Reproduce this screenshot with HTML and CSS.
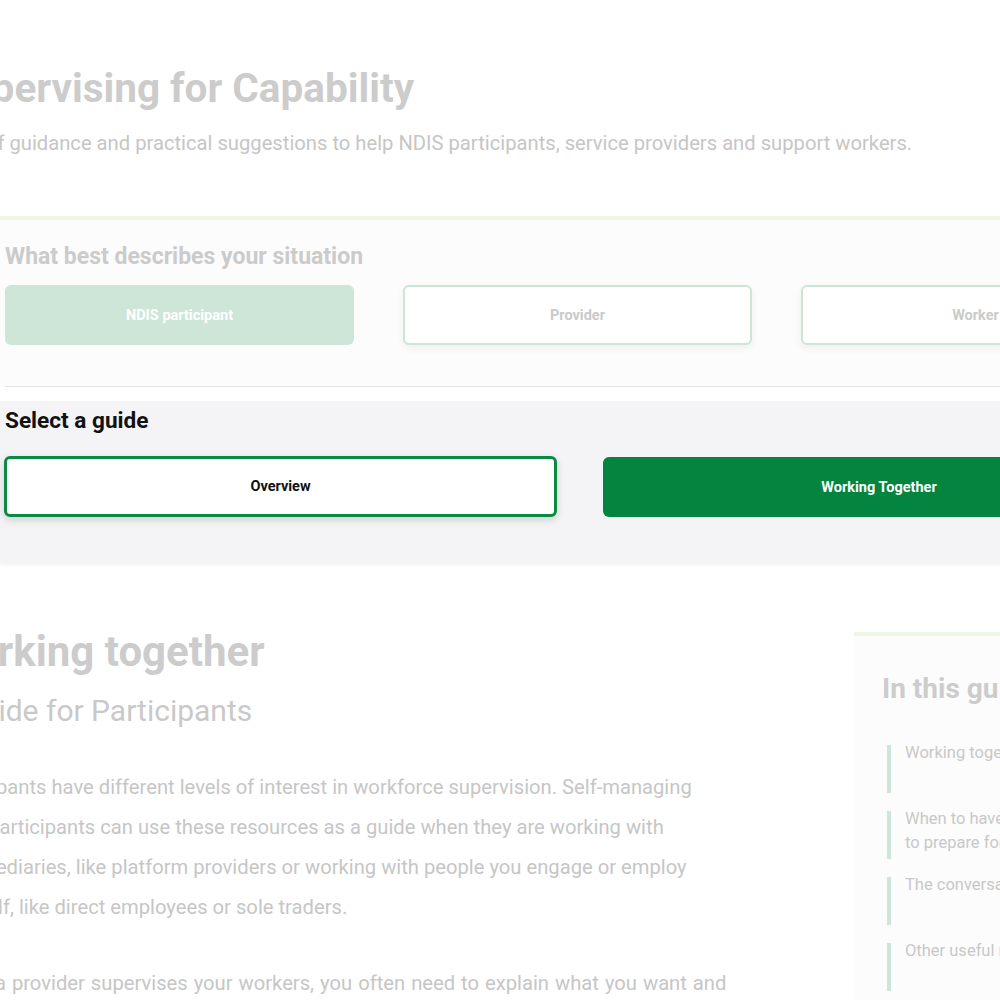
FILE: index.html
```html
<!DOCTYPE html>
<html lang="en">
<head>
<meta charset="utf-8">
<title>Supervising for Capability</title>
<link rel="stylesheet" href="styles.css">
</head>
<body>
<div class="page">
  <header class="hero">
    <h1 class="hero-title">Supervising for Capability</h1>
    <p class="hero-sub">A set of guidance and practical suggestions to help NDIS participants, service providers and support workers.</p>
  </header>

  <section class="situation">
    <h2 class="situation-title">What best describes your situation</h2>
    <div class="situation-options">
      <button class="opt opt-active">NDIS participant</button>
      <button class="opt">Provider</button>
      <button class="opt">Worker</button>
    </div>
    <div class="separator"></div>
  </section>

  <section class="guides">
    <h2 class="guides-title">Select a guide</h2>
    <div class="guides-options">
      <button class="guide guide-outline">Overview</button>
      <button class="guide guide-filled">Working Together</button>
    </div>
  </section>

  <div class="content">
    <main class="main">
      <h2 class="main-title">Working together</h2>
      <p class="main-sub">A guide for Participants</p>
      <p class="para">Participants have different levels of interest in workforce supervision. Self-managing NDIS participants can use these resources as a guide when they are working with intermediaries, like platform providers or working with people you engage or employ yourself, like direct employees or sole traders.</p>
      <p class="para">When a provider supervises your workers, you often need to explain what you want and</p>
    </main>
    <aside class="toc">
      <h3 class="toc-title">In this guide</h3>
      <ul class="toc-list">
        <li class="toc-item"><span class="toc-text">Working together</span></li>
        <li class="toc-item"><span class="toc-text">When to have a conversation and how<br>to prepare for it</span></li>
        <li class="toc-item"><span class="toc-text">The conversation</span></li>
        <li class="toc-item"><span class="toc-text">Other useful resources</span></li>
      </ul>
    </aside>
  </div>
</div>
</body>
</html>
```

FILE: styles.css
```css
html, body {
  margin: 0;
  padding: 0;
  background: #ffffff;
}
body {
  overflow: hidden;
  font-family: Roboto, "Noto Sans", sans-serif;
  width: 1000px;
  height: 1000px;
}
.page {
  width: 1200px;
}
button {
  font-family: inherit;
  cursor: pointer;
}
.hero {
  margin-left: -56px;
  padding-top: 63px;
}
.hero-title {
  margin: 0;
  font-size: 40.5px;
  line-height: 50px;
  font-weight: 700;
  color: #cccccc;
}
.hero-sub {
  margin: 17px 0 0 -9px;
  font-size: 20.2px;
  line-height: 26px;
  color: #c6c6c6;
}
.situation {
  margin-top: 60px;
  border-top: 4px solid #eef5e3;
  background: #fcfcfc;
  padding: 22px 0 0 5px;
}
.situation-title {
  margin: 0;
  font-size: 23px;
  line-height: 30px;
  font-weight: 700;
  color: #cbcbcb;
}
.situation-options {
  margin-top: 13px;
  display: grid;
  grid-template-columns: 349px 349px 349px;
  column-gap: 49px;
}
.opt {
  height: 60px;
  border: 2px solid #cbe6d6;
  border-radius: 6px;
  background: #ffffff;
  color: #cacaca;
  font-size: 14.5px;
  font-weight: 700;
  box-shadow: 0 3px 8px rgba(0, 0, 0, 0.06);
}
.opt-active {
  background: #cde6d8;
  border-color: #cde6d8;
  color: #ffffff;
  box-shadow: none;
}
.separator {
  margin-top: 41px;
  height: 1px;
  background: #e3e3e3;
}
.guides {
  margin-top: 14px;
  background: #f4f3f6;
  padding: 5px 0 46px 5px;
  box-shadow: 0 2px 3px rgba(0, 0, 0, 0.05);
}
.guides-title {
  margin: 0;
  font-size: 22.6px;
  line-height: 30px;
  font-weight: 700;
  color: #111111;
}
.guides-options {
  margin-top: 20px;
  display: grid;
  grid-template-columns: 552px 552px;
  column-gap: 46px;
}
.guide {
  height: 61px;
  border-radius: 6px;
  font-size: 14.5px;
  font-weight: 700;
}
.guide-outline {
  margin-left: -1px;
  background: #ffffff;
  border: 3px solid #0a8a43;
  color: #111111;
  box-shadow: 0 3px 8px rgba(0, 0, 0, 0.15);
}
.guide-filled {
  background: #03843f;
  border: 0;
  color: #ffffff;
  height: 60px;
  margin-top: 1px;
}
.content {
  margin-top: 64px;
  display: flex;
  align-items: flex-start;
}
.main {
  margin-left: -62px;
  width: 800px;
  flex: none;
}
.main-title {
  margin: 0;
  font-size: 42px;
  line-height: 50px;
  font-weight: 700;
  color: #cccccc;
}
.main-sub {
  margin: 16px 0 0;
  font-size: 30px;
  line-height: 36px;
  color: #c9c9c9;
}
.para {
  margin: 38px 0 0;
  font-size: 20.2px;
  line-height: 40px;
  color: #c6c6c6;
}
.para + .para {
  margin-top: 36px;
  word-spacing: 1px;
}
.toc {
  margin-left: 116px;
  margin-top: 5px;
  width: 360px;
  flex: none;
  border-top: 4px solid #eef6e5;
  background: #fcfcfc;
  padding: 35px 0 0 28px;
  height: 400px;
}
.toc-title {
  margin: 0;
  font-size: 28px;
  line-height: 36px;
  font-weight: 700;
  color: #cccccc;
}
.toc-list {
  list-style: none;
  margin: 38px 0 0 5px;
  padding: 0;
}
.toc-item {
  display: flow-root;
  border-left: 4px solid #cde6d8;
  padding-left: 14px;
  height: 48px;
  margin-bottom: 18px;
}
.toc-text {
  display: block;
  margin-top: -4px;
  font-size: 16.5px;
  line-height: 24px;
  color: #c8c8c8;
}
```
